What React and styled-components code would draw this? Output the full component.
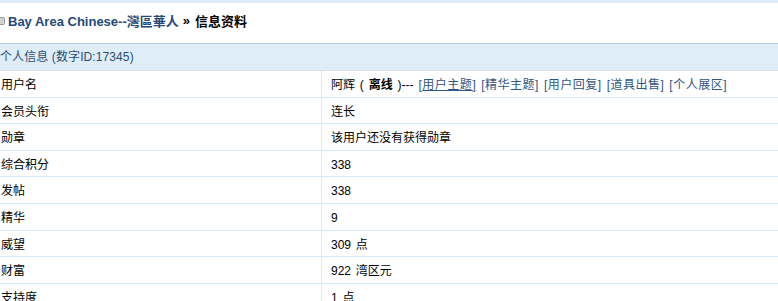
import React from 'react';
import styled, { createGlobalStyle } from 'styled-components';

const GlobalStyle = createGlobalStyle`
  html, body {
    margin: 0;
    padding: 0;
    background: #fff;
    overflow: hidden;
  }
  body {
    font-family: "Liberation Sans", "Noto Sans CJK SC", sans-serif;
    font-size: 12px;
    color: #000;
  }
`;

const Page = styled.div`
  width: 778px;
  border-top: 3px solid #e1edf6;
`;

const Nav = styled.div`
  display: flex;
  align-items: center;
  height: 35px;
  padding-bottom: 5px;
  font-weight: bold;
  font-size: 13px;
  border-bottom: 1px solid #b7cddd;
`;

const NavIcon = styled.span`
  display: inline-block;
  width: 4px;
  height: 6px;
  margin: 0 3px 0 0;
  background: #d4d4d4;
  border: 1px solid #9a9a9a;
  border-left: none;
  border-radius: 0 2px 2px 0;
`;

const NavLink = styled.a`
  color: #24497a;
  text-decoration: none;
`;

const NavSep = styled.span`
  margin: 0 5px 0 4px;
`;

const Table = styled.div`
  display: grid;
  grid-template-columns: 322px 1fr;
`;

const Head = styled.div`
  grid-column: 1 / -1;
  height: 26px;
  line-height: 27px;
  background: #deedf8;
  color: #2c4d73;
  border-bottom: 1px solid #d2e3ef;
  letter-spacing: 0.1px;
`;

const Cell = styled.div`
  height: 22.6px;
  padding-top: 3px;
  line-height: 23px;
  border-bottom: 1px solid #d9e8f1;
  white-space: nowrap;
  word-spacing: 1.5px;
  ${p => p.$label ? `
    border-right: 1px solid #d9e8f1;
    padding-left: 1px;
  ` : `
    padding-left: 9px;
  `}
`;

const Link = styled.a`
  color: #2f5684;
  text-decoration: ${p => (p.$active ? 'underline' : 'none')};
  margin-left: 5px;
  letter-spacing: 0.5px;
`;

const Strong = styled.b`
  font-weight: bold;
`;

const rows = [
  ['会员头衔', '连长'],
  ['勋章', '该用户还没有获得勋章'],
  ['综合积分', '338'],
  ['发帖', '338'],
  ['精华', '9'],
  ['威望', '309 点'],
  ['财富', '922 湾区元'],
  ['支持度', '1 点'],
];

const links = ['用户主题', '精华主题', '用户回复', '道具出售', '个人展区'];

export default function App() {
  return (
    <>
      <GlobalStyle />
      <Page>
        <Nav>
          <NavIcon />
          <NavLink href="#">Bay Area Chinese--灣區華人</NavLink>
          <NavSep>»</NavSep>
          <span>信息资料</span>
        </Nav>
        <Table>
          <Head>个人信息 (数字ID:17345)</Head>
          <Cell $label>用户名</Cell>
          <Cell>
            阿辉 ( <Strong>离线</Strong> )---
            {links.map((l, i) => (
              <Link key={l} href="#" $active={i === 0}>[{l}]</Link>
            ))}
          </Cell>
          {rows.map(([k, v]) => (
            <React.Fragment key={k}>
              <Cell $label>{k}</Cell>
              <Cell>{v}</Cell>
            </React.Fragment>
          ))}
        </Table>
      </Page>
    </>
  );
}
